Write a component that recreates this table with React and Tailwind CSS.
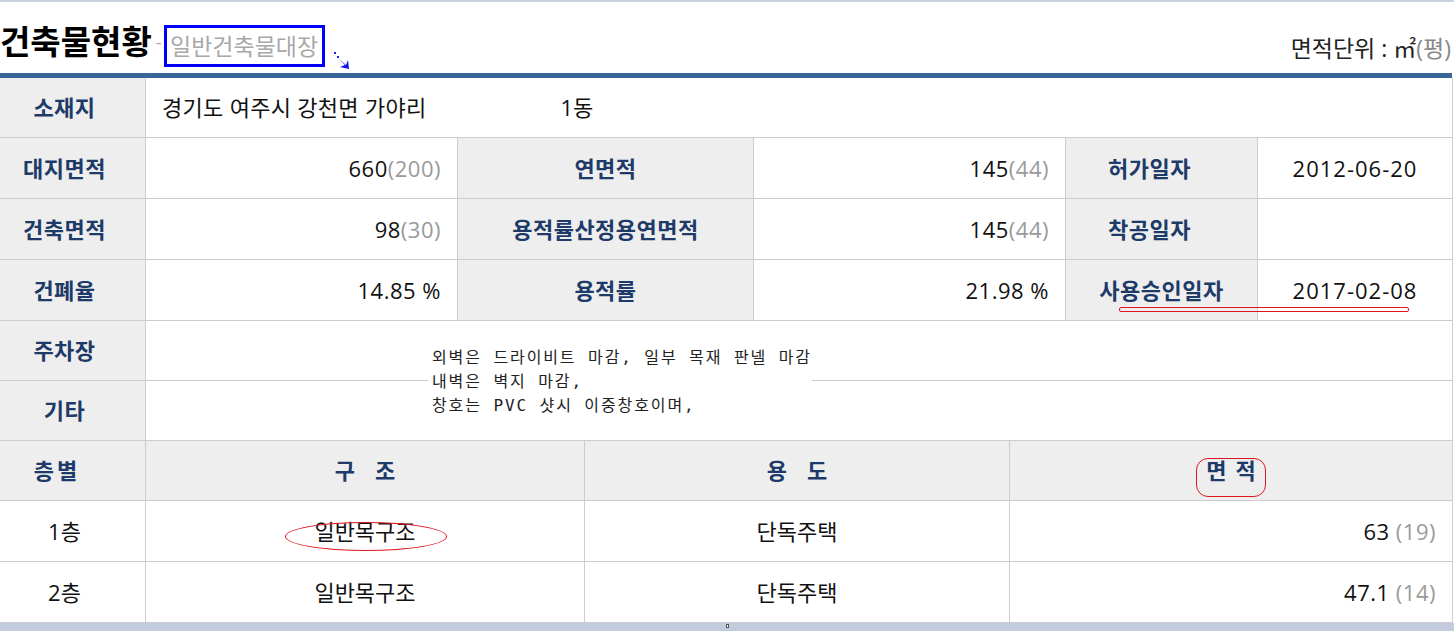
import React from 'react'

const font = { fontFamily: '"Open Sans", "Noto Sans CJK KR", sans-serif' }

function Label({ children, className = '' }) {
  return (
    <div className={`flex items-center justify-center bg-[#eeeeee] border-r border-b border-[#cccccc] text-[22px] font-bold text-[#1d3a68] tracking-[0.5px] ${className}`}>
      {children}
    </div>
  )
}

function Val({ children, className = '' }) {
  return (
    <div className={`flex items-center border-r border-b border-[#cccccc] text-[22px] text-[#111] bg-white ${className}`}>
      {children}
    </div>
  )
}

function Num({ v, p, gap }) {
  return (
    <span className="tracking-[0.5px]">
      {v}
      {gap ? ' ' : ''}
      <span className="text-[#9a9a9a]">({p})</span>
    </span>
  )
}

export default function App() {
  return (
    <div className="w-[1454px] h-[631px] bg-white overflow-hidden relative" style={font}>
      {/* top edge */}
      <div className="h-[2px] bg-[#c9d1df]" />

      {/* title bar */}
      <div className="h-[71px] flex items-end justify-between pb-[8px]">
        <div className="flex items-end">
          <h1 className="text-[33px] font-bold text-black leading-none pb-[7px]">건축물현황</h1>
          <span className="text-[#aaa] text-[18px] leading-none ml-[4px] pb-[14px]">-</span>
          <div className="ml-[2px] mb-[-2px] h-[42px] w-[161px] border-[3px] border-[#0000ff] flex items-center justify-center">
            <span className="text-[23px] text-[#a8a8a8] leading-none">일반건축물대장</span>
          </div>
          <svg width="18" height="20" viewBox="0 0 18 20" className="ml-[8px] mb-[-6px]">
            <rect x="1" y="1" width="2" height="2" fill="#1a1aff" />
            <rect x="4" y="5" width="2" height="2" fill="#1a1aff" />
            <path d="M6 8 L13 14 L15 9 L16 18 L7 16 L12 14 Z" fill="#1010ee" />
          </svg>
        </div>
        <div className="text-[23px] text-[#222] leading-none pb-[5px] pr-[3px]">
          면적단위 : ㎡<span className="text-[#888]">(평)</span>
        </div>
      </div>

      {/* blue rule */}
      <div className="h-[5px] bg-[#386597] w-[1452px]" />

      {/* upper table */}
      <div className="relative w-[1453px]">
        <div className="grid grid-cols-[146px_312px_296px_312px_192px_195px]">
          <Label className="h-[60px] pr-[16px]">소재지</Label>
          <Val className="h-[60px] col-span-5 pl-[16px]">
            <span className="tracking-[0.3px]">경기도 여주시 강천면 가야리</span>
            <span className="ml-[134px]">1동</span>
          </Val>

          <Label className="h-[61px] pr-[16px]">대지면적</Label>
          <Val className="h-[61px] justify-end pr-[16px]"><Num v="660" p="200" /></Val>
          <Label className="h-[61px]">연면적</Label>
          <Val className="h-[61px] justify-end pr-[16px]"><Num v="145" p="44" /></Val>
          <Label className="h-[61px] pr-[24px]">허가일자</Label>
          <Val className="h-[61px] justify-center tracking-[1px]">2012-06-20</Val>

          <Label className="h-[61px] pr-[16px]">건축면적</Label>
          <Val className="h-[61px] justify-end pr-[16px]"><Num v="98" p="30" /></Val>
          <Label className="h-[61px]">용적률산정용연면적</Label>
          <Val className="h-[61px] justify-end pr-[16px]"><Num v="145" p="44" /></Val>
          <Label className="h-[61px] pr-[24px]">착공일자</Label>
          <Val className="h-[61px] justify-center" />

          <Label className="h-[61px] pr-[16px]">건폐율</Label>
          <Val className="h-[61px] justify-end pr-[16px] tracking-[0.5px]">14.85 %</Val>
          <Label className="h-[61px]">용적률</Label>
          <Val className="h-[61px] justify-end pr-[16px] tracking-[0.5px]">21.98 %</Val>
          <Label className="h-[61px]">사용승인일자</Label>
          <Val className="h-[61px] justify-center tracking-[1px]">2017-02-08</Val>

          <Label className="h-[60px] pr-[16px]">주차장</Label>
          <Val className="h-[60px] col-span-5" />
          <Label className="h-[60px] pr-[16px]">기타</Label>
          <Val className="h-[60px] col-span-5" />
        </div>

        {/* pasted note over the parking / etc rows */}
        <div
          className="absolute left-[428px] top-[262px] w-[384px] h-[88px] bg-white pl-[4px] pt-[6px] text-[16px] leading-[24px] text-[#222] whitespace-pre tracking-[1.9px]"
          style={{ fontFamily: '"DejaVu Sans Mono", "Noto Sans CJK KR", monospace' }}
        >
          {'외벽은 드라이비트 마감, 일부 목재 판넬 마감\n내벽은 벽지 마감,\n창호는 PVC 샷시 이중창호이며,'}
        </div>

        {/* red underline annotation */}
        <div className="absolute left-[1119px] top-[229px] w-[290px] h-[5px] border border-[#e0141e] rounded-[2px]" />
      </div>

      {/* floor table */}
      <div className="relative w-[1453px]">
        <div className="grid grid-cols-[146px_439px_425px_443px]">
          <Label className="h-[60px] pr-[34px]"><span className="tracking-[3px] pl-[3px]">층별</span></Label>
          <Label className="h-[60px]"><span className="tracking-[20px] pl-[20px]">구조</span></Label>
          <Label className="h-[60px]"><span className="tracking-[20px] pl-[20px]">용도</span></Label>
          <Label className="h-[60px]"><span className="tracking-[9px] pl-[9px]">면적</span></Label>

          <Val className="h-[61px] justify-center pr-[16px]">1층</Val>
          <Val className="h-[61px] justify-center">일반목구조</Val>
          <Val className="h-[61px] justify-center">단독주택</Val>
          <Val className="h-[61px] justify-end pr-[16px]"><Num v="63" p="19" gap /></Val>

          <Val className="h-[61px] justify-center pr-[16px]">2층</Val>
          <Val className="h-[61px] justify-center">일반목구조</Val>
          <Val className="h-[61px] justify-center">단독주택</Val>
          <Val className="h-[61px] justify-end pr-[16px]"><Num v="47.1" p="14" gap /></Val>
        </div>

        {/* red annotations */}
        <div className="absolute left-[1196px] top-[17px] w-[70px] h-[39px] border border-[#e0141e] rounded-[12px]" />
        <div className="absolute left-[285px] top-[81px] w-[162px] h-[29px] border border-[#e0141e] rounded-[50%]" />
      </div>

      {/* scrollbar strip */}
      <div className="h-[8px] bg-[#c3ccdc] relative">
        <div className="absolute left-[726px] top-[1px] w-[3px] h-[4px] bg-white border border-[#555]" />
      </div>
    </div>
  )
}
